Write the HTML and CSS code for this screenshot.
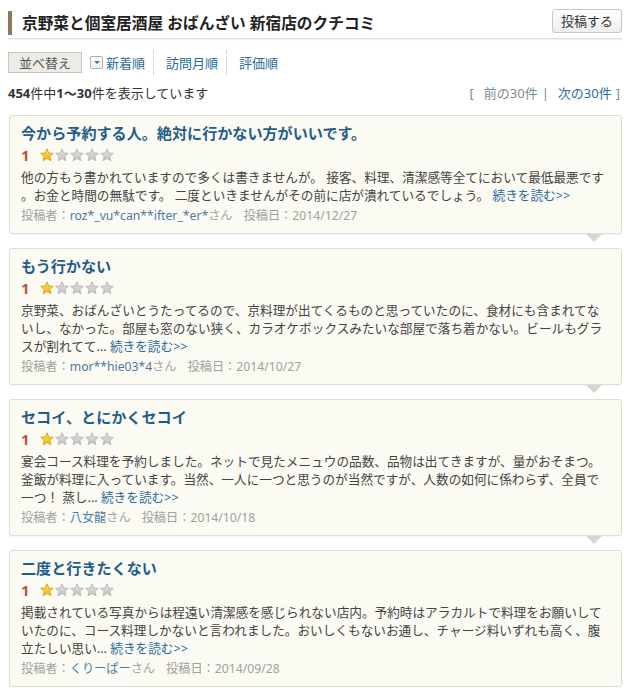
FILE: index.html
```html
<!DOCTYPE html>
<html lang="ja">
<head>
<meta charset="utf-8">
<title>京野菜と個室居酒屋 おばんざい 新宿店のクチコミ</title>
<link rel="stylesheet" href="styles.css">
</head>
<body>
<svg width="0" height="0" class="defs" aria-hidden="true">
  <defs>
    <linearGradient id="gGold" x1="0" y1="0" x2="0" y2="1">
      <stop offset="0" stop-color="#fbdc5a"/>
      <stop offset="1" stop-color="#f0b818"/>
    </linearGradient>
    <linearGradient id="gGray" x1="0" y1="0" x2="0" y2="1">
      <stop offset="0" stop-color="#e2e2e2"/>
      <stop offset="1" stop-color="#c2c2c2"/>
    </linearGradient>
    <path id="star" d="M7 0.8 L8.76 4.97 L13.28 5.36 L9.85 8.33 L10.88 12.74 L7 10.4 L3.12 12.74 L4.15 8.33 L0.72 5.36 L5.24 4.97 Z"/>
  </defs>
</svg>
<div class="page">
  <header class="header">
    <h1 class="title">京野菜と個室居酒屋 おばんざい 新宿店のクチコミ</h1>
    <button class="post-btn">投稿する</button>
  </header>

  <div class="sort-row">
    <button class="sort-btn">並べ替え</button>
    <div class="sort-item first"><span class="dd"></span><a class="link">新着順</a></div>
    <div class="sort-item"><a class="link">訪問月順</a></div>
    <div class="sort-item"><a class="link">評価順</a></div>
  </div>

  <div class="count-row">
    <div class="count"><b>454</b>件中<b>1～30</b>件を表示しています</div>
    <div class="pager"><span class="bracket">[</span><span class="prev">前の30件</span><span class="bar">|</span><a class="link">次の30件</a><span class="bracket">]</span></div>
  </div>

  <article class="card">
    <h2 class="card-title">今から予約する人。絶対に行かない方がいいです。</h2>
    <div class="rating"><span class="score">1</span><span class="stars"><svg class="st" viewBox="0 0 14 14"><use href="#star" class="on"/></svg><svg class="st" viewBox="0 0 14 14"><use href="#star" class="off"/></svg><svg class="st" viewBox="0 0 14 14"><use href="#star" class="off"/></svg><svg class="st" viewBox="0 0 14 14"><use href="#star" class="off"/></svg><svg class="st" viewBox="0 0 14 14"><use href="#star" class="off"/></svg></span></div>
    <p class="body">他の方もう書かれていますので多くは書きませんが。 接客、料理、清潔感等全てにおいて最低最悪です<br>。お金と時間の無駄です。 二度といきませんがその前に店が潰れているでしょう。 <a class="link">続きを読む&gt;&gt;</a></p>
    <p class="meta">投稿者：<a class="user">roz*_vu*can**ifter_*er*</a>さん<span class="date">投稿日：2014/12/27</span></p>
  </article>

  <article class="card">
    <h2 class="card-title">もう行かない</h2>
    <div class="rating"><span class="score">1</span><span class="stars"><svg class="st" viewBox="0 0 14 14"><use href="#star" class="on"/></svg><svg class="st" viewBox="0 0 14 14"><use href="#star" class="off"/></svg><svg class="st" viewBox="0 0 14 14"><use href="#star" class="off"/></svg><svg class="st" viewBox="0 0 14 14"><use href="#star" class="off"/></svg><svg class="st" viewBox="0 0 14 14"><use href="#star" class="off"/></svg></span></div>
    <p class="body">京野菜、おばんざいとうたってるので、京料理が出てくるものと思っていたのに、食材にも含まれてな<br>いし、なかった。部屋も窓のない狭く、カラオケボックスみたいな部屋で落ち着かない。ビールもグラ<br>スが割れてて... <a class="link">続きを読む&gt;&gt;</a></p>
    <p class="meta">投稿者：<a class="user">mor**hie03*4</a>さん<span class="date">投稿日：2014/10/27</span></p>
  </article>

  <article class="card">
    <h2 class="card-title">セコイ、とにかくセコイ</h2>
    <div class="rating"><span class="score">1</span><span class="stars"><svg class="st" viewBox="0 0 14 14"><use href="#star" class="on"/></svg><svg class="st" viewBox="0 0 14 14"><use href="#star" class="off"/></svg><svg class="st" viewBox="0 0 14 14"><use href="#star" class="off"/></svg><svg class="st" viewBox="0 0 14 14"><use href="#star" class="off"/></svg><svg class="st" viewBox="0 0 14 14"><use href="#star" class="off"/></svg></span></div>
    <p class="body">宴会コース料理を予約しました。ネットで見たメニュウの品数、品物は出てきますが、量がおそまつ。<br>釜飯が料理に入っています。当然、一人に一つと思うのが当然ですが、人数の如何に係わらず、全員で<br>一つ！ 蒸し... <a class="link">続きを読む&gt;&gt;</a></p>
    <p class="meta">投稿者：<a class="user">八女龍</a>さん<span class="date">投稿日：2014/10/18</span></p>
  </article>

  <article class="card">
    <h2 class="card-title">二度と行きたくない</h2>
    <div class="rating"><span class="score">1</span><span class="stars"><svg class="st" viewBox="0 0 14 14"><use href="#star" class="on"/></svg><svg class="st" viewBox="0 0 14 14"><use href="#star" class="off"/></svg><svg class="st" viewBox="0 0 14 14"><use href="#star" class="off"/></svg><svg class="st" viewBox="0 0 14 14"><use href="#star" class="off"/></svg><svg class="st" viewBox="0 0 14 14"><use href="#star" class="off"/></svg></span></div>
    <p class="body">掲載されている写真からは程遠い清潔感を感じられない店内。予約時はアラカルトで料理をお願いして<br>いたのに、コース料理しかないと言われました。おいしくもないお通し、チャージ料いずれも高く、腹<br>立たしい思い... <a class="link">続きを読む&gt;&gt;</a></p>
    <p class="meta">投稿者：<a class="user">くりーぱー</a>さん<span class="date">投稿日：2014/09/28</span></p>
  </article>
</div>
</body>
</html>
```

FILE: styles.css
```css
* { box-sizing: border-box; }

html, body {
  margin: 0;
  padding: 0;
  background: #ffffff;
}

body {
  font-family: "Noto Sans", "Noto Sans CJK JP", sans-serif;
  font-size: 13px;
  color: #333333;
}

.defs {
  position: absolute;
  width: 0;
  height: 0;
  overflow: hidden;
}

.page {
  width: 632px;
  padding: 8px 10px 0 8px;
}

/* header */
.header {
  display: flex;
  justify-content: space-between;
  align-items: flex-start;
  height: 31px;
  border-bottom: 1px solid #dcdcdc;
  box-shadow: 0 1px 1px rgba(0, 0, 0, 0.05);
}

.title {
  margin: 3px 0 0 0;
  border-left: 4px solid #8b7a5a;
  padding-left: 10px;
  height: 24px;
  line-height: 24px;
  font-size: 15.7px;
  font-weight: bold;
  color: #222222;
}

.post-btn {
  margin-top: 1px;
  width: 70px;
  height: 24px;
  padding: 0;
  border: 1px solid #c8c8c8;
  border-radius: 3px;
  background: linear-gradient(#ffffff, #eeeeee);
  font-family: inherit;
  font-size: 13px;
  color: #333333;
  line-height: 20px;
}

/* sort row */
.sort-row {
  display: flex;
  align-items: center;
  height: 25px;
  margin-top: 11px;
}

.sort-btn {
  width: 74px;
  height: 21px;
  padding: 0;
  border: 1px solid #c9c6bc;
  background: #ecebe5;
  font-family: inherit;
  font-size: 13px;
  color: #555555;
  line-height: 18px;
}

.sort-item {
  display: flex;
  align-items: center;
  height: 25px;
  padding: 0 8px 0 12px;
  border-left: 1px dotted #b8b8b8;
}

.sort-item.first {
  border-left: none;
  padding-left: 8px;
}

.dd {
  position: relative;
  width: 13px;
  height: 13px;
  margin-right: 3px;
  border: 1px solid #b0b0b0;
  border-radius: 2px;
  background: linear-gradient(#ffffff, #f0f0f0);
}

.dd::after {
  content: "";
  position: absolute;
  left: 3px;
  top: 4px;
  border-left: 3px solid transparent;
  border-right: 3px solid transparent;
  border-top: 3px solid #666666;
}

.link {
  color: #2a6b9b;
  text-decoration: none;
}

/* count row */
.count-row {
  display: flex;
  justify-content: space-between;
  align-items: center;
  height: 18px;
  margin-top: 9px;
  line-height: 18px;
}

.count b {
  font-weight: bold;
}

.pager {
  display: flex;
  align-items: center;
  color: #888888;
  padding-right: 2px;
}

.pager .bracket:first-child { margin-right: 10px; }
.pager .bracket:last-child { margin-left: 4px; }
.pager .bar { margin: 0 9px 0 4px; }
.pager .prev { color: #7a8a96; }

/* review cards */
.card {
  position: relative;
  margin: 13px 0 0 1px;
  padding: 7px 12px 8px 11px;
  background: #fbfaf3;
  border: 1px solid #e0ddd2;
  border-radius: 3px;
  box-shadow: 0 1px 1px rgba(0, 0, 0, 0.04);
}

.card + .card {
  margin-top: 14px;
}

.card::after {
  content: "";
  position: absolute;
  right: 19px;
  bottom: -9px;
  border-left: 8px solid transparent;
  border-right: 8px solid transparent;
  border-top: 8px solid #d8d6ce;
}

.card-title {
  margin: 0 0 2px 0;
  font-size: 15.1px;
  font-weight: bold;
  line-height: 20px;
  color: #1f5d8a;
}

.rating {
  display: flex;
  align-items: center;
  height: 20px;
}

.score {
  font-size: 15px;
  font-weight: bold;
  color: #c0503e;
  width: 19px;
}

.stars {
  display: flex;
  gap: 1px;
}

.st {
  width: 14px;
  height: 14px;
  display: block;
}

.st .on {
  fill: url(#gGold);
  stroke: #d5a216;
  stroke-width: 0.9;
  stroke-linejoin: round;
}

.st .off {
  fill: url(#gGray);
  stroke: #b5b5b5;
  stroke-width: 0.9;
  stroke-linejoin: round;
}

.body {
  margin: 3px 0 0 0;
  font-size: 12.65px;
  line-height: 18px;
  color: #444444;
  white-space: nowrap;
}

.meta {
  margin: 3px 0 0 0;
  font-size: 12.2px;
  line-height: 18px;
  color: #a0a0a0;
}

.user {
  color: #4a7aa3;
}

.date {
  margin-left: 11px;
}
```
